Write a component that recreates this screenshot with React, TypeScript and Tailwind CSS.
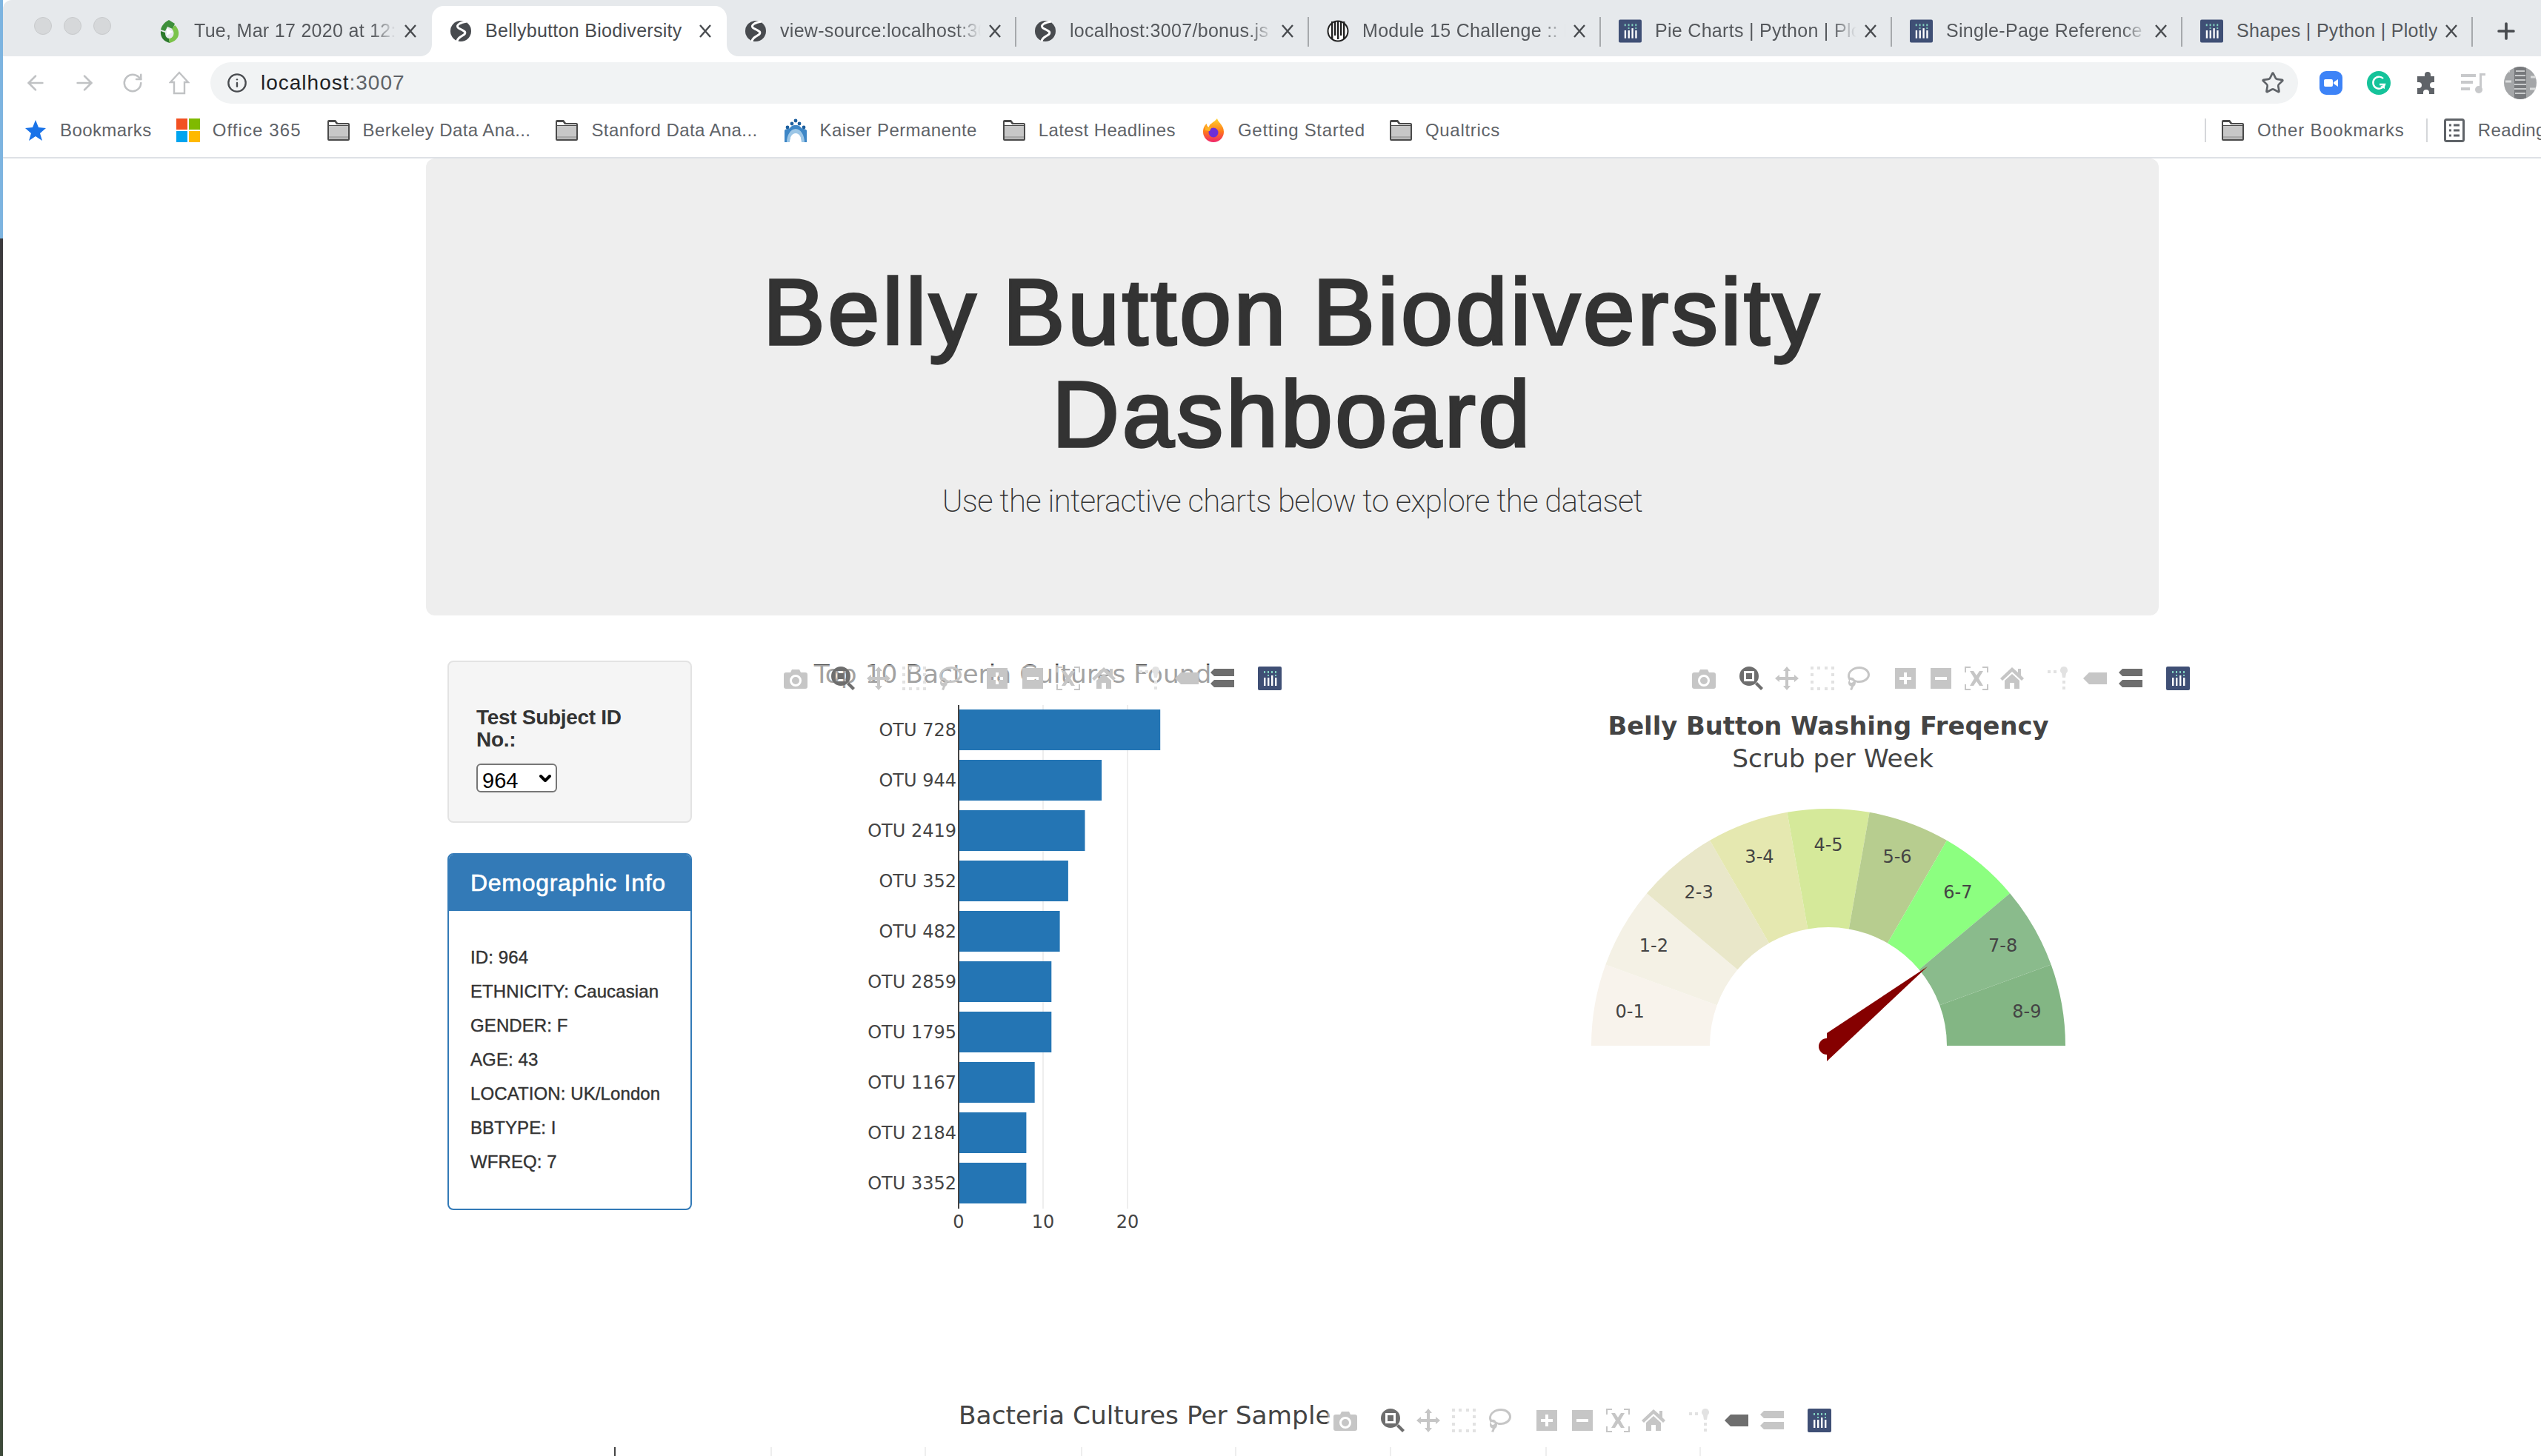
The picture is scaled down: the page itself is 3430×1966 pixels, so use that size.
import { ArrowLeft, ArrowRight, ChevronDown, Info, Plus, RotateCw, Star } from "lucide-react";

type TabInfo = { title: string; icon: string; width: string; active?: boolean; divider?: boolean; fade?: boolean };

const tabs: TabInfo[] = [
  { title: "Tue, Mar 17 2020 at 12:41 PM", icon: "green", width: "w-[393px]", fade: true },
  { title: "Bellybutton Biodiversity", icon: "globe", width: "w-[398px]", active: true },
  { title: "view-source:localhost:3007", icon: "globe", width: "w-[391px]", divider: true, fade: true },
  { title: "localhost:3007/bonus.js", icon: "globe", width: "w-[395px]", divider: true, fade: true },
  { title: "Module 15 Challenge :: Data", icon: "module", width: "w-[394px]", divider: true, fade: true },
  { title: "Pie Charts | Python | Plotly", icon: "plotly", width: "w-[393px]", divider: true, fade: true },
  { title: "Single-Page Reference | Python", icon: "plotly", width: "w-[392px]", divider: true, fade: true },
  { title: "Shapes | Python | Plotly", icon: "plotly", width: "w-[392px]", divider: true },
];

const bookmarks = [
  { label: "Office 365", icon: "office", gap: "ml-[33px]", text: "tracking-[1.1px]" },
  { label: "Berkeley Data Ana...", icon: "folder", gap: "ml-[34px]", text: "" },
  { label: "Stanford Data Ana...", icon: "folder", gap: "ml-[33px]", text: "" },
  { label: "Kaiser Permanente", icon: "kaiser", gap: "ml-[35px]", text: "" },
  { label: "Latest Headlines", icon: "folder", gap: "ml-[34px]", text: "" },
  { label: "Getting Started", icon: "firefox", gap: "ml-[35px]", text: "tracking-[0.7px]" },
  { label: "Qualtrics", icon: "folder", gap: "ml-[32px]", text: "tracking-[0.7px]" },
];

const demographics = ["ID: 964", "ETHNICITY: Caucasian", "GENDER: F", "AGE: 43", "LOCATION: UK/London", "BBTYPE: I", "WFREQ: 7"];

const bars = [
  { label: "OTU 728", value: 24 },
  { label: "OTU 944", value: 17 },
  { label: "OTU 2419", value: 15 },
  { label: "OTU 352", value: 13 },
  { label: "OTU 482", value: 12 },
  { label: "OTU 2859", value: 11 },
  { label: "OTU 1795", value: 11 },
  { label: "OTU 1167", value: 9 },
  { label: "OTU 2184", value: 8 },
  { label: "OTU 3352", value: 8 },
];

const gaugeParts = [
  { label: "0-1", color: "#f8f3ec" },
  { label: "1-2", color: "#f4f1e5" },
  { label: "2-3", color: "#e9e7c9" },
  { label: "3-4", color: "#e5e8b0" },
  { label: "4-5", color: "#d5e99a" },
  { label: "5-6", color: "#b7cd8f" },
  { label: "6-7", color: "#8cff80" },
  { label: "7-8", color: "#8abb8c" },
  { label: "8-9", color: "#83b684" },
];

function Globe() {
  return (
    <svg width="30" height="32" viewBox="0 0 30 32" className="shrink-0">
      <circle cx="15" cy="16" r="14" fill="#484b4f" />
      <path d="M23 3C15 4 7 8 12 12c6 3 12 5 7 9-5 3-9 5-9 9" fill="none" stroke="#fff" strokeWidth="3" />
    </svg>
  );
}

function PlotlyLogo({ className }: { className: string }) {
  return (
    <svg viewBox="0 0 32 32" className={className}>
      <rect width="32" height="32" rx="2" fill="#3f4f75" />
      {[8, 13, 18, 23].map((x) => (
        <rect key={x} x={x} y="6" width="2" height="3" fill="#80cfbe" />
      ))}
      {[13, 23].map((x) => (
        <rect key={x} x={x} y="11" width="2" height="2" fill="#80cfbe" />
      ))}
      <rect x="8" y="15" width="2.4" height="11" fill="#fff" />
      <rect x="13" y="15" width="2.4" height="11" fill="#fff" />
      <rect x="18" y="12" width="2.4" height="14" fill="#fff" />
      <rect x="23" y="15" width="2.4" height="11" fill="#fff" />
    </svg>
  );
}

function TabIcon({ kind }: { kind: string }) {
  if (kind === "globe") return <Globe />;
  if (kind === "plotly") return <PlotlyLogo className="h-[32px] w-[31px] shrink-0" />;
  if (kind === "module") {
    return (
      <svg width="30" height="32" viewBox="0 0 30 32" className="shrink-0">
        <circle cx="15" cy="16" r="13.5" fill="#fff" stroke="#222" strokeWidth="2" />
        {[7, 11, 15, 19, 23].map((x, i) => (
          <rect key={x} x={x - 1} y="3" width="2.4" height={i % 2 ? 19 : 24} fill="#222" />
        ))}
      </svg>
    );
  }
  return (
    <svg width="30" height="32" viewBox="0 0 30 32" className="shrink-0">
      <path d="M14 1l8 5-3 7-7-3-3 6-6-2C4 9 8 4 14 1z" fill="#3d8f3a" />
      <path d="M3 16l6 2c0 4 1 7 5 8l1 6C7 30 2 24 3 16z" fill="#2d7a2d" />
      <path d="M22 8c6 5 7 14 2 19-3 3-6 4-9 5l-1-6c6 0 9-8 4-13z" fill="#7bc34a" />
      <path d="M11 12l8 5-8 5z" fill="#fff" />
    </svg>
  );
}

function Tab({ tab }: { tab: TabInfo }) {
  return (
    <div
      className={`relative flex h-[68px] shrink-0 items-center gap-[18px] pl-[24px] pr-[20px] ${tab.width} ${
        tab.active ? "rounded-t-[16px] bg-white text-[#484b4f]" : "text-[#55585c]"
      }`}
    >
      {tab.active && (
        <>
          <svg viewBox="0 0 16 16" className="absolute -left-[16px] bottom-0 h-[16px] w-[16px]">
            <path d="M16 0v16H0c9 0 16-7 16-16z" fill="#fff" />
          </svg>
          <svg viewBox="0 0 16 16" className="absolute -right-[16px] bottom-0 h-[16px] w-[16px]">
            <path d="M0 0v16H16C7 16 0 9 0 0z" fill="#fff" />
          </svg>
        </>
      )}
      <TabIcon kind={tab.icon} />
      <div
        className={`min-w-0 flex-1 overflow-hidden whitespace-nowrap text-[25px] tracking-[0.3px] ${
          tab.fade ? "[mask-image:linear-gradient(to_right,black_88%,transparent_100%)]" : ""
        }`}
      >
        {tab.title}
      </div>
      <svg width="18" height="18" viewBox="0 0 18 18" className="-ml-[8px] shrink-0">
        <path d="M2 1l14 16M16 1L2 17" stroke="#484b4f" strokeWidth="2.4" />
      </svg>
      {tab.divider && <div className="absolute right-0 top-[15px] h-[40px] w-[2px] bg-[#a6a9ac]" />}
    </div>
  );
}

function Folder() {
  return (
    <svg width="32" height="32" viewBox="0 0 32 32" className="shrink-0">
      <path d="M1 4a2 2 0 0 1 2-2h9l3 4h14a2 2 0 0 1 2 2v20a2 2 0 0 1-2 2H3a2 2 0 0 1-2-2z" fill="#4a4a4a" />
      <path d="M3 5h8l2 3h16v1H3z" fill="#fff" />
      <rect x="3" y="10" width="26" height="18" fill="#c7c7c7" />
      <rect x="3" y="24" width="26" height="3" fill="#a9a9a9" />
    </svg>
  );
}

function BookmarkIcon({ kind }: { kind: string }) {
  if (kind === "folder") return <Folder />;
  if (kind === "office") {
    return (
      <div className="grid h-[32px] w-[32px] shrink-0 grid-cols-2 gap-[2px]">
        <div className="bg-[#f25022]" />
        <div className="bg-[#7fba00]" />
        <div className="bg-[#00a4ef]" />
        <div className="bg-[#ffb900]" />
      </div>
    );
  }
  if (kind === "kaiser") {
    return (
      <svg width="32" height="32" viewBox="0 0 32 32" className="shrink-0">
        <path d="M1 32V16c3-3 5-1 7-3 2-2 3-4 8-4s6 2 8 4 4 0 7 3v16h-7c0-8-3-14-8-14s-8 6-8 14z" fill="#3d86c6" />
        <path d="M4 32c0-9 5-18 12-18s12 9 12 18h-4c0-7-3-12-8-12s-8 5-8 12z" fill="#9cc6e6" />
        {[5, 11, 16, 21, 27].map((x, i) => (
          <circle key={x} cx={x} cy={i === 2 ? 3 : i % 2 ? 7 : 12} r="2.4" fill="#1d5f9e" />
        ))}
      </svg>
    );
  }
  return (
    <svg width="32" height="32" viewBox="0 0 32 32" className="shrink-0">
      <defs>
        <linearGradient id="fox" x1="0" y1="0" x2="0" y2="1">
          <stop offset="0" stopColor="#ffd52e" />
          <stop offset="0.55" stopColor="#ff7a1a" />
          <stop offset="1" stopColor="#f0246b" />
        </linearGradient>
      </defs>
      <path d="M21 0c1 5 9 9 9 18a14 14 0 0 1-28 0c0-5 2-9 5-11 0 3 1 4 3 5 0-5 6-6 11-12z" fill="url(#fox)" />
      <circle cx="16" cy="19" r="6.5" fill="#6e2ed6" />
      <path d="M5 11l8 1-2 5-6-1z" fill="#ffb323" />
    </svg>
  );
}

function ExtensionIcons() {
  return (
    <div className="ml-[29px] flex items-center gap-[33px]">
      <svg width="31" height="32" viewBox="0 0 31 32">
        <rect width="31" height="32" rx="9" fill="#3d83f7" />
        <rect x="6" y="11" width="12" height="10" rx="2" fill="#fff" />
        <path d="M19 15l6-4v10l-6-4z" fill="#fff" />
      </svg>
      <svg width="32" height="32" viewBox="0 0 32 32">
        <circle cx="16" cy="16" r="16" fill="#15c39a" />
        <path d="M22 10a8 8 0 1 0 2 8h-7" fill="none" stroke="#fff" strokeWidth="2.4" />
        <path d="M18 21l6-3v6z" fill="#fff" />
      </svg>
      <svg width="29" height="32" viewBox="0 0 29 32">
        <path
          d="M9 7h4V5a4 4 0 0 1 8 0v2h5v8h-2a4 4 0 0 0 0 8h2v8h-7v-2a4 4 0 0 0-8 0v2H3v-8h2a4 4 0 0 0 0-8H3V7z"
          fill="#5f6368"
        />
      </svg>
      <svg width="33" height="32" viewBox="0 0 33 32">
        <g fill="#c8c9cb">
          <rect x="0" y="4" width="20" height="4" />
          <rect x="0" y="13" width="16" height="4" />
          <rect x="0" y="22" width="12" height="4" />
          <rect x="25" y="3" width="8" height="3" />
          <rect x="25" y="3" width="3" height="22" />
          <circle cx="24" cy="25" r="5" />
        </g>
      </svg>
      <svg width="44" height="44" viewBox="0 0 44 44" className="-ml-[8px]">
        <defs>
          <clipPath id="avatar">
            <circle cx="22" cy="22" r="22" />
          </clipPath>
        </defs>
        <g clipPath="url(#avatar)">
          <rect width="44" height="44" fill="#a4a6a8" />
          <path d="M14 0h16v44H14z" fill="#77797c" />
          <path d="M16 6h12M15 12h14M15 18h14M14 24h16M14 30h16M15 36h14" stroke="#c9cbcc" strokeWidth="2" />
          <path d="M0 6h8M2 20h8M36 14h8M35 30h8" stroke="#dcdddd" strokeWidth="3" />
        </g>
      </svg>
    </div>
  );
}

function BrowserChrome() {
  return (
    <div className="border-b-[2px] border-[#dee1e6]">
      <div className="flex h-[76px] items-end rounded-tl-[12px] bg-[#e6e9ec]">
        <div className="flex h-full w-[186px] shrink-0 items-center gap-[16px] pb-[6px] pl-[42px]">
          <div className="h-[24px] w-[24px] rounded-full border border-[#c8cacc] bg-[#d6d8da]" />
          <div className="h-[24px] w-[24px] rounded-full border border-[#c8cacc] bg-[#d6d8da]" />
          <div className="h-[24px] w-[24px] rounded-full border border-[#c8cacc] bg-[#d6d8da]" />
        </div>
        {tabs.map((tab) => (
          <Tab key={tab.title} tab={tab} />
        ))}
        <div className="flex h-[68px] items-center pl-[28px] text-[#484b4f]">
          <Plus size={34} strokeWidth={2.6} />
        </div>
      </div>
      <div className="flex h-[64px] items-start pl-[28px] pt-[8px]">
        <div className="flex h-[56px] items-center gap-[34px] text-[#c0c2c4]">
          <ArrowLeft size={32} strokeWidth={2} />
          <ArrowRight size={32} strokeWidth={2} />
          <RotateCw size={30} strokeWidth={2} />
          <svg width="28" height="32" viewBox="0 0 28 32">
            <path d="M14 2L26 15h-5v15H7V15H2z" fill="none" stroke="#c0c2c4" strokeWidth="2.4" />
          </svg>
        </div>
        <div className="ml-[28px] flex h-[56px] w-[2818px] shrink-0 items-center rounded-full bg-[#f1f3f4] pl-[22px] pr-[18px]">
          <Info size={28} strokeWidth={2} className="text-[#484b4f]" />
          <span className="ml-[18px] text-[28px] tracking-[1px] text-[#202124]">
            localhost<span className="text-[#5f6368]">:3007</span>
          </span>
          <Star size={32} strokeWidth={2} className="ml-auto text-[#5f6368]" />
        </div>
        <div className="flex h-[56px] items-center">
          <ExtensionIcons />
        </div>
      </div>
      <div className="flex h-[72px] items-center whitespace-nowrap pb-[1px] pl-[30px] text-[24px] tracking-[0.4px] text-[#5f6368]">
        <div className="flex shrink-0 items-center gap-[19px]">
          <svg width="28" height="30" viewBox="0 0 28 30">
            <path d="M14 1l4 10 10 1-8 7 3 10-9-6-9 6 3-10-8-7 10-1z" fill="#1a73e8" />
          </svg>
          <span>Bookmarks</span>
        </div>
        {bookmarks.map((b) => (
          <div key={b.label} className={`flex shrink-0 items-center gap-[17px] ${b.gap}`}>
            <BookmarkIcon kind={b.icon} />
            <span className={b.text}>{b.label}</span>
          </div>
        ))}
        <div className="ml-[951px] flex shrink-0 items-center">
          <div className="h-[32px] w-[2px] bg-[#d5d7da]" />
          <div className="ml-[20px] flex items-center gap-[17px]">
            <Folder />
            <span className="tracking-[0.8px]">Other Bookmarks</span>
          </div>
          <div className="ml-[29px] h-[32px] w-[2px] bg-[#d5d7da]" />
          <div className="ml-[22px] flex items-center gap-[18px]">
            <svg width="28" height="32" viewBox="0 0 28 32">
              <rect x="1.5" y="1.5" width="25" height="29" rx="2" fill="none" stroke="#5f6368" strokeWidth="3" />
              <path d="M7 9h3M13 9h8M7 16h3M13 16h8M7 23h3M13 23h8" stroke="#5f6368" strokeWidth="3" />
            </svg>
            <span>Reading List</span>
          </div>
        </div>
      </div>
    </div>
  );
}

function Tool({ path, active, light }: { path: string; active?: boolean; light?: boolean }) {
  const fill = active ? "#6e6e6e" : light ? "#e2e2e2" : "#c6c6c6";
  return (
    <svg viewBox="0 0 32 32" className="h-[32px] w-[32px]">
      <path d={path} fill={fill} fillRule="evenodd" />
    </svg>
  );
}

const icons = {
  camera:
    "M11 4h10l2 4h6a3 3 0 0 1 3 3v16a3 3 0 0 1-3 3H3a3 3 0 0 1-3-3V11a3 3 0 0 1 3-3h6zM16 11a8 8 0 1 0 0 16a8 8 0 0 0 0-16zM16 14a5 5 0 1 1 0 10a5 5 0 0 1 0-10z",
  zoom: "M13 0a13 13 0 1 1 0 26a13 13 0 0 1 0-26zM6 6v14h14V6zM9 9h8v8H9zM21 24l3-3 8 8-3 3z",
  pan: "M16 0l5 6h-3v8h8v-3l6 5-6 5v-3h-8v8h3l-5 6-5-6h3v-8H6v3l-6-5 6-5v3h8V6h-3z",
  select:
    "M0 0h4v4H0zM9 0h4v4H9zM19 0h4v4h-4zM28 0h4v4h-4zM0 9h4v4H0zM28 9h4v4h-4zM0 19h4v4H0zM28 19h4v4h-4zM0 28h4v4H0zM9 28h4v4H9zM19 28h4v4h-4zM28 28h4v4h-4z",
  lasso:
    "M18 0c8 0 14 5 14 11s-6 11-14 11c-2 0-4 0-5-1 0 3-1 5-3 6l-2 5-3-1 2-4c-3-1-4-3-4-5 0-1 0-2 1-3-1-2-2-4-2-6C2 6 9 0 18 0zM18 3C11 3 5 7 5 12c0 1 0 2 1 3 2-1 4 0 6 3 2 1 4 1 6 1 6 0 11-4 11-8s-5-8-11-8zM5 18v2c0 1 1 2 2 2 1 0 2-1 3-2-1-1-3-2-5-2z",
  zoomIn: "M2 2h28v28H2zM14 8v6H8v4h6v6h4v-6h6v-4h-6V8z",
  zoomOut: "M2 2h28v28H2zM8 14v4h16v-4z",
  autoscale:
    "M0 0h8v2H2v6H0zM24 0h8v8h-2V2h-6zM0 24h2v6h6v2H0zM30 24h2v8h-8v-2h6zM7 6h5l4 6 4-6h5l-6 10 6 10h-5l-4-6-4 6H7l6-10z",
  home: "M16 1l8 7V3h4v9l4 4-3 3-13-12L3 19l-3-3zM16 10l10 9v11h-7v-8h-6v8H6V19z",
  spike: "M0 5h4v4H0zM8 5h4v4H8zM22 0a5 5 0 0 1 3 9l-1 6h-4l-1-6a5 5 0 0 1 3-9zM20 19h4v4h-4zM20 27h4v4h-4z",
  closest: "M0 16l8-8h24v16H8z",
  compare: "M0 8l5-5h27v10H5zM0 23l5-5h27v10H5z",
};

function ModeBar({ closestActive }: { closestActive?: boolean }) {
  return (
    <div className="absolute right-[40px] top-[18px] flex gap-8 bg-white/50 py-[2px] pl-[8px]">
      <Tool path={icons.camera} />
      <div className="flex gap-4">
        <Tool path={icons.zoom} active />
        <Tool path={icons.pan} />
        <Tool path={icons.select} light />
        <Tool path={icons.lasso} />
      </div>
      <div className="flex gap-4">
        <Tool path={icons.zoomIn} />
        <Tool path={icons.zoomOut} />
        <Tool path={icons.autoscale} />
        <Tool path={icons.home} />
      </div>
      <div className="flex gap-4">
        <Tool path={icons.spike} light />
        <Tool path={icons.closest} active={closestActive} />
        <Tool path={icons.compare} active={!closestActive} />
      </div>
      <PlotlyLogo className="h-[32px] w-[32px]" />
    </div>
  );
}

function BarChart() {
  return (
    <div className="relative ml-[56px] h-[780px] w-[780px] shrink-0">
      <svg viewBox="990 880 780 780" className="h-full w-full font-['DejaVu_Sans',sans-serif]">
        <text x="1367" y="922" fontSize="34.4" textAnchor="middle" fill="#444">
          Top 10 Bacteria Cultures Found
        </text>
        <path d="M1408 952v680M1522 952v680" stroke="#eee" strokeWidth="2" />
        {bars.map((bar, i) => (
          <g key={bar.label}>
            <rect x="1295" y={958 + i * 68} width={bar.value * 11.3} height="55" fill="#2475b4" />
            <text x="1291" y={994 + i * 68} fontSize="24" textAnchor="end" fill="#444">
              {bar.label}
            </text>
          </g>
        ))}
        <path d="M1294 952v680" stroke="#444" strokeWidth="2" />
        {[
          { x: 1294, t: "0" },
          { x: 1408, t: "10" },
          { x: 1522, t: "20" },
        ].map((tick) => (
          <text key={tick.t} x={tick.x} y="1658" fontSize="24" textAnchor="middle" fill="#444">
            {tick.t}
          </text>
        ))}
      </svg>
      <ModeBar />
    </div>
  );
}

function slicePath(i: number) {
  const cx = 2468;
  const cy = 1412;
  const a0 = Math.PI - (i * Math.PI) / 9;
  const a1 = Math.PI - ((i + 1) * Math.PI) / 9;
  const pt = (r: number, a: number) => `${cx + r * Math.cos(a)} ${cy - r * Math.sin(a)}`;
  return `M${pt(320, a0)}A320 320 0 0 1 ${pt(320, a1)}L${pt(160, a1)}A160 160 0 0 0 ${pt(160, a0)}Z`;
}

function GaugeChart() {
  return (
    <div className="relative ml-[230px] h-[780px] w-[996px] shrink-0">
      <svg viewBox="2000 880 996 780" className="h-full w-full font-['DejaVu_Sans',sans-serif]">
        <text x="2468" y="992" fontSize="33.8" fontWeight="700" textAnchor="middle" fill="#444">
          Belly Button Washing Freqency
        </text>
        <text x="2474" y="1036" fontSize="34.4" textAnchor="middle" fill="#444">
          Scrub per Week
        </text>
        {gaugeParts.map((part, i) => {
          const a = Math.PI - ((i + 0.5) * Math.PI) / 9;
          return (
            <g key={part.label}>
              <path d={slicePath(i)} fill={part.color} />
              <text
                x={2468 + 272 * Math.cos(a)}
                y={1412 - 272 * Math.sin(a) + 9}
                fontSize="24"
                textAnchor="middle"
                fill="#444"
              >
                {part.label}
              </text>
            </g>
          );
        })}
        <circle cx="2466" cy="1413" r="11" fill="#850000" />
        <path d="M2602 1305L2466 1395V1433z" fill="#850000" />
      </svg>
      <ModeBar />
    </div>
  );
}

export default function App() {
  return (
    <div className="flex h-[1966px] w-full overflow-hidden bg-white font-['Liberation_Sans',sans-serif] text-[#333]">
      <div className="flex w-[4px] shrink-0 flex-col">
        <div className="h-[322px] bg-[#7db4e0]" />
        <div className="flex-1 bg-gradient-to-b from-[#3b3a3d] via-[#5a4a3f] to-[#3d4a3a]" />
      </div>
      <div className="w-[3481px] shrink-0">
        <BrowserChrome />
        <div className="mx-auto w-[2339px]">
          <div className="rounded-[12px] bg-[#eee] pb-[124px] pt-[139px] text-center">
            <h1 className="text-[126px] font-normal leading-[138px] tracking-[3.6px] [-webkit-text-stroke:3.5px_#333] [word-spacing:-6px]">
              Belly Button Biodiversity
              <br />
              Dashboard
            </h1>
            <p className="mt-[18px] font-['Roboto',sans-serif] text-[42px] font-extralight leading-[60px] tracking-[-0.7px]">
              Use the interactive charts below to explore the dataset
            </p>
          </div>

          <div className="mt-[49px] flex">
            <div className="ml-[29px] w-[330px] shrink-0 pt-[12px]">
              <div className="h-[219px] rounded-[8px] border-[2px] border-[#e3e3e3] bg-[#f5f5f5] pl-[37px] pt-[60px]">
                <label className="block w-[220px] text-[28px] font-bold leading-[30px] tracking-[-0.3px]">Test Subject ID No.:</label>
                <div className="relative mt-[17px] h-[39px] w-[109px]">
                  <select
                    defaultValue="964"
                    className="h-full w-full appearance-none rounded-[6px] border-[2px] border-[#767676] bg-white pl-[6px] text-[29px] text-black"
                  >
                    <option>964</option>
                  </select>
                  <ChevronDown
                    size={24}
                    strokeWidth={4}
                    className="pointer-events-none absolute right-[4px] top-[8px] text-black"
                  />
                </div>
              </div>
              <div className="mt-[41px] h-[482px] overflow-hidden rounded-[8px] border-[2px] border-[#337ab7]">
                <div className="flex h-[76px] items-center bg-[#337ab7] pl-[29px] text-[32px] tracking-[0.7px] text-white [-webkit-text-stroke:0.6px_#fff]">
                  Demographic Info
                </div>
                <div className="pl-[29px] pt-[50px]">
                  {demographics.map((line) => (
                    <h6 key={line} className="mb-[20px] text-[24px] font-normal leading-[26px] tracking-[0.1px] [-webkit-text-stroke:0.4px_#333]">
                      {line}
                    </h6>
                  ))}
                </div>
              </div>
            </div>
            <BarChart />
            <GaugeChart />
          </div>
        </div>

        <div className="relative ml-[756px] mt-[222px] h-[84px] w-[1752px]">
          <svg viewBox="760 1882 1752 84" className="h-full w-full font-['DejaVu_Sans',sans-serif]">
            <text x="1294" y="1923" fontSize="34.4" fill="#444">
              Bacteria Cultures Per Sample
            </text>
            <path d="M1041 1954v12M1249 1954v12M1460 1954v12M1668 1954v12M1877 1954v12M2087 1954v12M2295 1954v12" stroke="#eee" strokeWidth="2" />
            <path d="M830 1954v12" stroke="#444" strokeWidth="2" />
          </svg>
          <ModeBar closestActive />
        </div>
      </div>
    </div>
  );
}
